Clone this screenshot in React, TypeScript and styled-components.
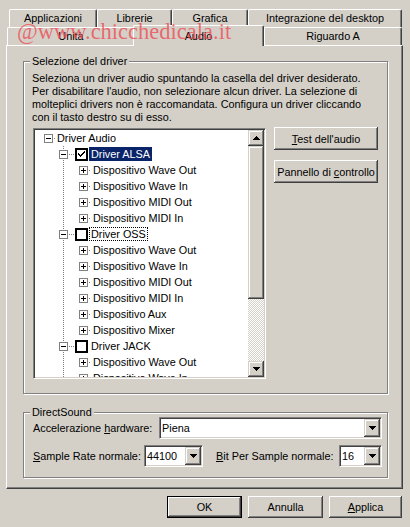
import React from "react";
import styled, { createGlobalStyle, css } from "styled-components";

const FACE = "#d4d0c8";
const LIGHT = "#ffffff";
const SHADOW = "#808080";
const DARK = "#404040";
const HILITE = "#0a246a";

const GlobalStyle = createGlobalStyle`
  * { box-sizing: border-box; }
  html, body { margin: 0; padding: 0; background: ${FACE}; }
  body {
    font-family: "Liberation Sans", Arial, sans-serif;
    font-size: 10.85px;
    color: #000;
  }
`;

const raised = css`
  background: ${FACE};
  box-shadow: inset -1px -1px ${DARK}, inset 1px 1px ${LIGHT},
    inset -2px -2px ${SHADOW}, inset 2px 2px ${FACE};
`;

const raisedScroll = css`
  background: ${FACE};
  box-shadow: inset -1px -1px ${DARK}, inset 1px 1px ${FACE},
    inset -2px -2px ${SHADOW}, inset 2px 2px ${LIGHT};
`;

const sunken = css`
  border: 1px solid;
  border-color: ${SHADOW} ${LIGHT} ${LIGHT} ${SHADOW};
  padding: 1px;
  background: #fff;
  box-shadow: inset 1px 1px ${DARK}, inset -1px -1px ${FACE};
`;

const Dialog = styled.div`
  position: relative;
  width: 410px;
  height: 527px;
  padding-top: 9px;
  background: ${FACE};
  overflow: hidden;
`;

const Watermark = styled.div`
  position: absolute;
  left: 17px;
  top: 21px;
  z-index: 5;
  font-family: "Liberation Serif", "Times New Roman", serif;
  font-size: 22.5px;
  line-height: 22px;
  color: rgba(238, 70, 80, 0.75);
  white-space: nowrap;
  pointer-events: none;
`;

/* tabs */
const TabRow = styled.div<{ $indent: number }>`
  display: flex;
  height: 18px;
  padding-left: ${(p) => p.$indent}px;
`;

const Tab = styled.div<{ $w: number; $active?: boolean }>`
  flex: none;
  width: ${(p) => p.$w}px;
  height: 18px;
  display: flex;
  align-items: center;
  justify-content: center;
  padding-bottom: 1px;
  background: ${FACE};
  border-top: 1px solid ${LIGHT};
  border-left: 1px solid ${LIGHT};
  border-right: 1px solid ${DARK};
  border-radius: 2px 2px 0 0;
  box-shadow: inset -1px 0 ${SHADOW};
  white-space: nowrap;

  ${(p) =>
    p.$active &&
    css`
      position: relative;
      z-index: 2;
      height: 21px;
      margin: -2px 0 0 -2px;
      padding-bottom: 0;
    `}
`;

const Panel = styled.div`
  margin-left: 6px;
  width: 397px;
  height: 444px;
  padding: 9px 0 0 16px;
  border-top: 1px solid ${LIGHT};
  border-left: 1px solid ${LIGHT};
  border-right: 1px solid ${DARK};
  border-bottom: 1px solid ${DARK};
  box-shadow: inset -1px -1px ${SHADOW};
`;

/* group boxes */
const GroupBox = styled.fieldset<{ $top?: number; $bottom: number }>`
  width: 365px;
  min-width: 0;
  margin: ${(p) => p.$top ?? 0}px 0 0 0;
  padding: 0 3px ${(p) => p.$bottom}px 8px;
  border: 1px solid ${SHADOW};
  box-shadow: inset 1px 1px ${LIGHT}, 1px 1px ${LIGHT};
`;

const GroupTitle = styled.legend`
  margin-left: -2px;
  padding: 0 2px;
  line-height: 13px;
  background: ${FACE};
`;

const Description = styled.p`
  margin: 4px 0 0;
  line-height: 13px;
  white-space: nowrap;

  span { display: block; }
`;

const DriverRow = styled.div`
  display: flex;
  align-items: flex-start;
  gap: 8px;
  margin: 4px 0 0 1px;
`;

/* tree view */
const Tree = styled.div`
  ${sunken};
  flex: none;
  width: 233px;
  height: 251px;
  display: flex;
`;

const TreeList = styled.ul`
  flex: 1;
  margin: 0;
  padding: 0;
  list-style: none;
  overflow: hidden;
`;

const INDENT = [9, 24, 44];
const LINK = [2, 7, 3];

const TreeRow = styled.li<{ $level: number; $guide: boolean }>`
  display: flex;
  align-items: center;
  height: 16px;
  padding-left: ${(p) => INDENT[p.$level]}px;
  white-space: nowrap;

  ${(p) =>
    p.$guide &&
    css`
      background: repeating-linear-gradient(to bottom, ${SHADOW} 0 1px, transparent 1px 2px)
        28px 0 / 1px 100% no-repeat;
    `}
`;

const Expander = styled.span<{ $open: boolean }>`
  position: relative;
  flex: none;
  width: 9px;
  height: 9px;
  border: 1px solid ${SHADOW};
  background: #fff;

  &::before {
    content: "";
    position: absolute;
    left: 1px;
    top: 3px;
    width: 5px;
    height: 1px;
    background: #000;
  }

  ${(p) =>
    !p.$open &&
    css`
      &::after {
        content: "";
        position: absolute;
        left: 3px;
        top: 1px;
        width: 1px;
        height: 5px;
        background: #000;
      }
    `}
`;

const Connector = styled.span<{ $w: number }>`
  flex: none;
  width: ${(p) => p.$w}px;
  height: 1px;
  background: repeating-linear-gradient(to right, transparent 0 1px, ${SHADOW} 1px 2px);
`;

const StateBox = styled.span`
  flex: none;
  width: 13px;
  height: 13px;
  margin-right: 1px;
  border: 2px solid #000;
  background: #fff;
  display: flex;
  align-items: center;
  justify-content: center;
`;

const NodeText = styled.span<{ $selected?: boolean; $focused?: boolean }>`
  height: 14px;
  line-height: 12px;
  padding: 0 1px;
  border: 1px solid transparent;

  ${(p) =>
    p.$selected &&
    css`
      background: ${HILITE};
      border-color: ${HILITE};
      color: #fff;
    `}
  ${(p) =>
    p.$focused &&
    css`
      border: 1px dotted #000;
    `}
`;

/* scrollbar */
const ScrollBar = styled.div`
  flex: none;
  width: 16px;
  display: flex;
  flex-direction: column;
`;

const ScrollButton = styled.div`
  ${raisedScroll};
  flex: none;
  height: 16px;
  display: flex;
  align-items: center;
  justify-content: center;
`;

const ScrollThumb = styled.div<{ $h: number }>`
  ${raisedScroll};
  flex: none;
  height: ${(p) => p.$h}px;
`;

const ScrollTrack = styled.div`
  flex: 1;
  background: repeating-conic-gradient(${LIGHT} 0 25%, ${FACE} 0 50%) 0 0 / 2px 2px;
`;

/* buttons */
const PushButton = styled.button<{ $w: number; $h: number; $default?: boolean }>`
  ${raised};
  flex: none;
  width: ${(p) => p.$w}px;
  height: ${(p) => p.$h}px;
  padding: 0;
  border: none;
  font: inherit;
  color: #000;
  white-space: nowrap;

  ${(p) =>
    p.$default &&
    css`
      border: 1px solid #000;
    `}
`;

const SideButtons = styled.div`
  display: flex;
  flex-direction: column;
  gap: 10px;
  margin-top: -1px;
`;

const DialogButtons = styled.div`
  display: flex;
  justify-content: flex-end;
  gap: 6px;
  margin-top: 7px;
  padding-right: 8px;
`;

/* direct sound */
const FieldRow = styled.div<{ $top: number }>`
  display: flex;
  align-items: center;
  height: 22px;
  margin-top: ${(p) => p.$top}px;
  padding-left: 1px;
`;

const FieldLabel = styled.span<{ $w: number; $lead?: number }>`
  flex: none;
  width: ${(p) => p.$w}px;
  margin-left: ${(p) => p.$lead ?? 0}px;
  white-space: nowrap;
`;

const Combo = styled.div<{ $w: number }>`
  ${sunken};
  flex: none;
  width: ${(p) => p.$w}px;
  height: 22px;
  display: flex;
`;

const ComboValue = styled.span`
  flex: 1;
  padding-left: 1px;
  line-height: 18px;
`;

const ComboButton = styled.span`
  ${raisedScroll};
  flex: none;
  width: 16px;
  display: flex;
  align-items: center;
  justify-content: center;
`;

const ArrowDown = () => (
  <svg width="7" height="4" viewBox="0 0 7 4" shapeRendering="crispEdges">
    <path d="M0 0h7v1H0zM1 1h5v1H1zM2 2h3v1H2zM3 3h1v1H3z" fill="#000" />
  </svg>
);

const ArrowUp = () => (
  <svg width="7" height="4" viewBox="0 0 7 4" shapeRendering="crispEdges">
    <path d="M3 0h1v1H3zM2 1h3v1H2zM1 2h5v1H1zM0 3h7v1H0z" fill="#000" />
  </svg>
);

const CheckMark = () => (
  <svg width="9" height="9" viewBox="0 0 9 9" shapeRendering="crispEdges">
    <path d="M7 1h1v1H7zM6 2h2v1H6zM5 3h2v1H5zM1 3h1v1H1zM1 4h2v1H1zM4 4h2v1H4zM2 5h3v1H2zM3 6h1v1H3z" fill="#000" />
  </svg>
);

type TreeNode = {
  label: string;
  level: 0 | 1 | 2;
  open?: boolean;
  check?: "on" | "off";
  selected?: boolean;
  focused?: boolean;
};

const devices = (names: string[]): TreeNode[] =>
  names.map((n) => ({ label: `Dispositivo ${n}`, level: 2 }));

const TREE: TreeNode[] = [
  { label: "Driver Audio", level: 0, open: true },
  { label: "Driver ALSA", level: 1, open: true, check: "on", selected: true },
  ...devices(["Wave Out", "Wave In", "MIDI Out", "MIDI In"]),
  { label: "Driver OSS", level: 1, open: true, check: "off", focused: true },
  ...devices(["Wave Out", "Wave In", "MIDI Out", "MIDI In", "Aux", "Mixer"]),
  { label: "Driver JACK", level: 1, open: true, check: "off" },
  ...devices(["Wave Out", "Wave In", "MIDI Out"]),
];

export default function App() {
  return (
    <Dialog>
      <GlobalStyle />
      <Watermark>@www.chicchedicala.it</Watermark>

      <TabRow $indent={9}>
        <Tab $w={88}>Applicazioni</Tab>
        <Tab $w={75}>Librerie</Tab>
        <Tab $w={76}>Grafica</Tab>
        <Tab $w={154}>Integrazione del desktop</Tab>
      </TabRow>
      <TabRow $indent={7}>
        <Tab $w={128}>Unità</Tab>
        <Tab $w={131} $active>Audio</Tab>
        <Tab $w={138}>Riguardo A</Tab>
      </TabRow>

      <Panel>
        <GroupBox $bottom={14}>
          <GroupTitle>Selezione del driver</GroupTitle>
          <Description>
            <span>Seleziona un driver audio spuntando la casella del driver desiderato.</span>
            <span>Per disabilitare l'audio, non selezionare alcun driver. La selezione di</span>
            <span>molteplici drivers non è raccomandata. Configura un driver cliccando</span>
            <span>con il tasto destro su di esso.</span>
          </Description>

          <DriverRow>
            <Tree>
              <TreeList>
                {TREE.map((node, i) => (
                  <TreeRow key={i} $level={node.level} $guide={node.level > 0}>
                    <Expander $open={!!node.open} />
                    <Connector $w={LINK[node.level]} />
                    {node.check && (
                      <StateBox>{node.check === "on" && <CheckMark />}</StateBox>
                    )}
                    <NodeText $selected={node.selected} $focused={node.focused}>
                      {node.label}
                    </NodeText>
                  </TreeRow>
                ))}
              </TreeList>
              <ScrollBar>
                <ScrollButton>
                  <ArrowUp />
                </ScrollButton>
                <ScrollThumb $h={153} />
                <ScrollTrack />
                <ScrollButton>
                  <ArrowDown />
                </ScrollButton>
              </ScrollBar>
            </Tree>

            <SideButtons>
              <PushButton $w={104} $h={23}>
                <u>T</u>est dell'audio
              </PushButton>
              <PushButton $w={104} $h={23}>
                Pannello di <u>c</u>ontrollo
              </PushButton>
            </SideButtons>
          </DriverRow>
        </GroupBox>

        <GroupBox $top={12} $bottom={10}>
          <GroupTitle>DirectSound</GroupTitle>
          <FieldRow $top={-2}>
            <FieldLabel $w={126}>
              Accelerazione <u>h</u>ardware:
            </FieldLabel>
            <Combo $w={223}>
              <ComboValue>Piena</ComboValue>
              <ComboButton>
                <ArrowDown />
              </ComboButton>
            </Combo>
          </FieldRow>
          <FieldRow $top={6}>
            <FieldLabel $w={111}>
              <u>S</u>ample Rate normale:
            </FieldLabel>
            <Combo $w={59}>
              <ComboValue>44100</ComboValue>
              <ComboButton>
                <ArrowDown />
              </ComboButton>
            </Combo>
            <FieldLabel $w={123} $lead={13}>
              <u>B</u>it Per Sample normale:
            </FieldLabel>
            <Combo $w={43}>
              <ComboValue>16</ComboValue>
              <ComboButton>
                <ArrowDown />
              </ComboButton>
            </Combo>
          </FieldRow>
        </GroupBox>
      </Panel>

      <DialogButtons>
        <PushButton $w={75} $h={22} $default>
          OK
        </PushButton>
        <PushButton $w={75} $h={22}>
          Annulla
        </PushButton>
        <PushButton $w={73} $h={22}>
          <u>A</u>pplica
        </PushButton>
      </DialogButtons>
    </Dialog>
  );
}
